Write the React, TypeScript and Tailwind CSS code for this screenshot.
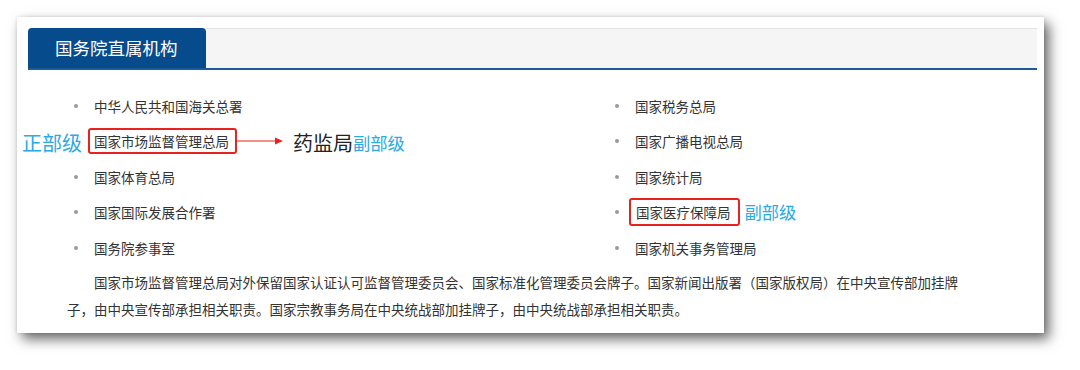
const leftItems = ['中华人民共和国海关总署', '国家市场监督管理总局', '国家体育总局', '国家国际发展合作署', '国务院参事室'];
const rightItems = ['国家税务总局', '国家广播电视总局', '国家统计局', '国家医疗保障局', '国家机关事务管理局'];

function Dot() {
  return (
    <span className="w-[20px] shrink-0 flex items-center">
      <span className="w-[4px] h-[4px] rounded-full bg-[#9a9a9a]" />
    </span>
  );
}

function Arrow() {
  // thin red pointer from the box to the annotation
  return (
    <svg width="46" height="10" viewBox="0 0 46 10" className="shrink-0">
      <line x1="0" y1="5" x2="39" y2="5" stroke="#e8231d" strokeWidth="1" />
      <polygon points="38,1.5 46,5 38,8.5" fill="#e8231d" />
    </svg>
  );
}

export default function App() {
  return (
    <div className="w-[1080px] h-[370px] bg-white pt-[17px] pl-[17px] font-['Noto_Sans_CJK_SC','Microsoft_YaHei',sans-serif]">
      <div className="w-[1027px] h-[316px] bg-white pt-[11px] pl-[11px] pr-[7px] shadow-[0_0_3px_rgba(0,0,0,0.12),5px_6px_12px_rgba(0,0,0,0.6)]">
        {/* Header tab */}
        <div className="flex h-[42px] border-b-2 border-[#1c5a99]">
          <div className="w-[178px] bg-[#064c8c] rounded-t-[4px] flex items-center pl-[27px] text-white text-[17.5px]">
            国务院直属机构
          </div>
          <div className="flex-1 bg-[#f5f5f5] border-t border-[#e2e2e2]" />
        </div>

        {/* Lists */}
        <div className="flex mt-[18px] pl-[46px] text-[13.5px] text-[#333]">
          <div className="w-[541px] flex flex-col">
            {leftItems.map((item, i) =>
              i === 1 ? (
                <div key={item} className="flex items-center h-[35.5px]">
                  <span className="w-[14px] shrink-0" />
                  <span className="relative h-[26px] flex items-center border-2 border-[#e8231d] rounded-[3px] pl-[4px] pr-[6px]">
                    <span className="absolute right-full mr-[8px] top-1/2 -translate-y-[45%] whitespace-nowrap text-[20px] text-[#2aaae6]">
                      正部级
                    </span>
                    {item}
                  </span>
                  <Arrow />
                  <span className="ml-[10px] text-[20px] text-[#222] translate-y-[2px]">药监局</span>
                  <span className="text-[17.3px] text-[#2aaae6] translate-y-[2px]">副部级</span>
                </div>
              ) : (
                <div key={item} className="flex items-center h-[35.5px]">
                  <Dot />
                  <span>{item}</span>
                </div>
              ),
            )}
          </div>
          <div className="flex flex-col">
            {rightItems.map((item, i) =>
              i === 3 ? (
                <div key={item} className="flex items-center h-[35.5px]">
                  <span className="w-[14px] shrink-0 flex items-center">
                    <span className="w-[4px] h-[4px] rounded-full bg-[#9a9a9a]" />
                  </span>
                  <span className="h-[28px] flex items-center border-2 border-[#e8231d] rounded-[3px] pl-[5px] pr-[7px]">
                    {item}
                  </span>
                  <span className="ml-[5px] text-[17.3px] text-[#2aaae6]">副部级</span>
                </div>
              ) : (
                <div key={item} className="flex items-center h-[35.5px]">
                  <Dot />
                  <span>{item}</span>
                </div>
              ),
            )}
          </div>
        </div>

        {/* Note paragraph */}
        <p className="mt-[3px] ml-[39px] w-[896px] indent-[2em] text-[13.5px] leading-[27px] text-[#333]">
          国家市场监督管理总局对外保留国家认证认可监督管理委员会、国家标准化管理委员会牌子。国家新闻出版署（国家版权局）在中央宣传部加挂牌子，由中央宣传部承担相关职责。国家宗教事务局在中央统战部加挂牌子，由中央统战部承担相关职责。
        </p>
      </div>
    </div>
  );
}
